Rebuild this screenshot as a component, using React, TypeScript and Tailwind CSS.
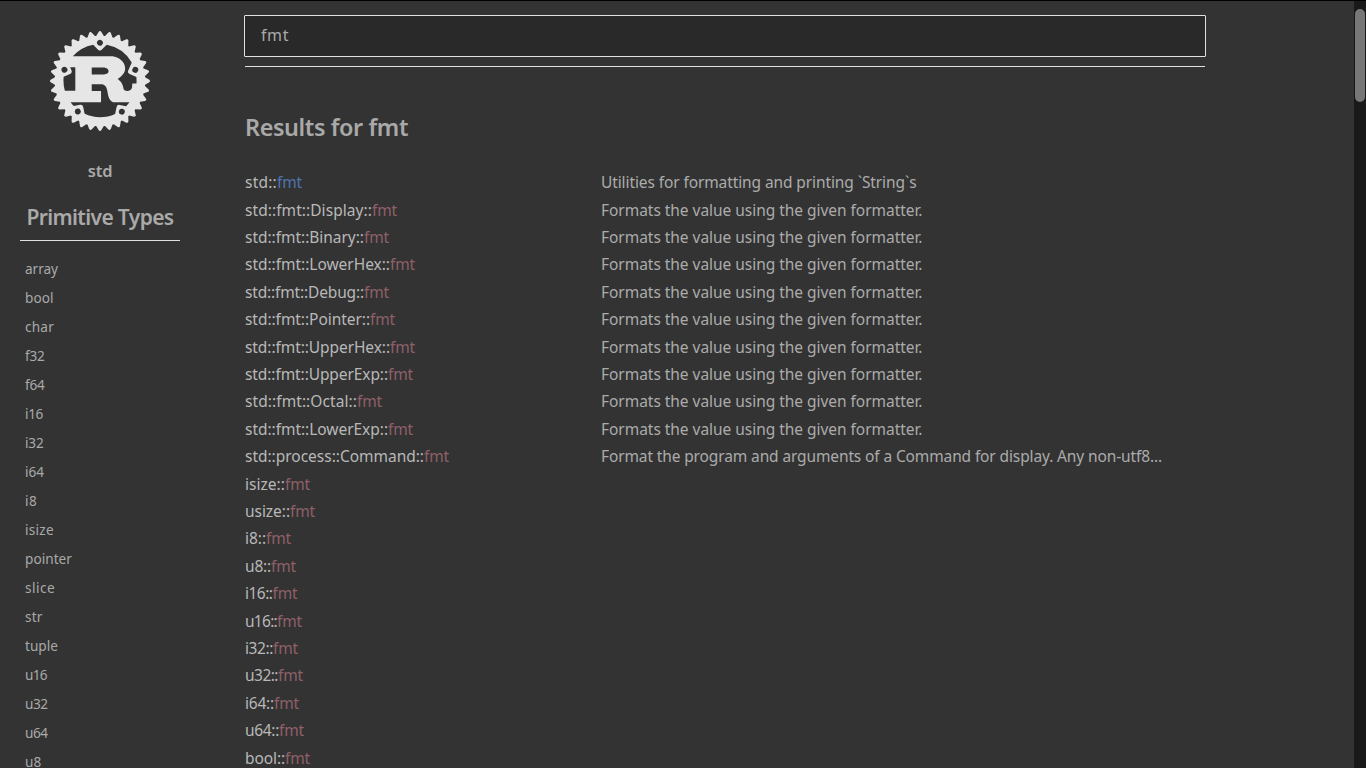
import { useLayoutEffect, useRef, useState } from "react";
import { SiRust } from "react-icons/si";

/** Text tracked so that its advance equals the given width in pixels. */
function Fit({ text, width, className = "" }: { text: string; width: number; className?: string }) {
  const ref = useRef<HTMLSpanElement>(null);
  const [spacing, setSpacing] = useState(0);
  useLayoutEffect(() => {
    const el = ref.current;
    if (!el) return;
    el.style.letterSpacing = "0px";
    const natural = el.getBoundingClientRect().width;
    const next = (width - natural) / text.length;
    el.style.letterSpacing = `${next}px`;
    setSpacing(next);
  }, [text, width]);
  return (
    <span ref={ref} className={`inline-block whitespace-pre ${className}`} style={{ letterSpacing: `${spacing}px` }}>
      {text}
    </span>
  );
}

const primitives: [string, number][] = [
  ["array", 33], ["bool", 28.5], ["char", 29], ["f32", 19.5], ["f64", 19.5], ["i16", 18], ["i32", 18.5],
  ["i64", 19], ["i8", 12.5], ["isize", 29], ["pointer", 47], ["slice", 30], ["str", 17.5], ["tuple", 33],
  ["u16", 22], ["u32", 22.5], ["u64", 22.5], ["u8", 16.5],
];

const given = "Formats the value using the given formatter.";

const results: { path: string; width: number; desc?: string; descWidth?: number; module?: boolean }[] = [
  { path: "std::", width: 32, desc: "Utilities for formatting and printing `String`s", descWidth: 315.5, module: true },
  { path: "std::fmt::Display::", width: 127, desc: given },
  { path: "std::fmt::Binary::", width: 119, desc: given },
  { path: "std::fmt::LowerHex::", width: 145, desc: given },
  { path: "std::fmt::Debug::", width: 119, desc: given },
  { path: "std::fmt::Pointer::", width: 125, desc: given },
  { path: "std::fmt::UpperHex::", width: 145, desc: given },
  { path: "std::fmt::UpperExp::", width: 143, desc: given },
  { path: "std::fmt::Octal::", width: 112, desc: given },
  { path: "std::fmt::LowerExp::", width: 143, desc: given },
  {
    path: "std::process::Command::",
    width: 179,
    desc: "Format the program and arguments of a Command for display. Any non-utf8...",
    descWidth: 561,
  },
  { path: "isize::", width: 40 },
  { path: "usize::", width: 45 },
  { path: "i8::", width: 21 },
  { path: "u8::", width: 26 },
  { path: "i16::", width: 27.5 },
  { path: "u16::", width: 32 },
  { path: "i32::", width: 28 },
  { path: "u32::", width: 33 },
  { path: "i64::", width: 29 },
  { path: "u64::", width: 34 },
  { path: "bool::", width: 40 },
];

function Sidebar() {
  return (
    <nav className="flex h-full w-[200px] shrink-0 flex-col overflow-hidden px-5 pt-[30px]">
      <SiRust className="size-[100px] shrink-0 self-center text-[#e6e6e6]" />
      <div className="mt-7 flex h-6 shrink-0 items-center justify-center text-[16.5px] font-semibold">
        <Fit text="std" width={24.5} />
      </div>
      <div className="mt-4 flex h-[42px] shrink-0 justify-center border-b border-[#e0e0e0] text-[21px] leading-[37px] font-semibold">
        <Fit text="Primitive Types" width={147} />
      </div>
      <div className="mt-[14px] flex flex-col pl-[5px] text-[13.6px]">
        {primitives.map(([name, width]) => (
          <a key={name} className="flex h-[29px] shrink-0 items-center">
            <Fit text={name} width={width} />
          </a>
        ))}
      </div>
    </nav>
  );
}

function Results() {
  return (
    <main className="flex w-[960px] shrink-0 flex-col pt-[14px] text-[15.5px]">
      <div className="-mx-px flex h-[42px] w-[962px] shrink-0 items-center rounded-[1px] border border-[#e0e0e0] bg-[#292929] px-4 pb-0.5">
        <Fit text="fmt" width={28} className="text-[16px]" />
      </div>
      <div className="mt-[9px] h-px shrink-0 bg-[#e0e0e0]" />
      <h1 className="mt-[43px] flex h-9 shrink-0 items-center text-[23.4px] font-semibold">
        <Fit text="Results for fmt" width={163} />
      </h1>
      <div className="mt-[23.06px] flex flex-col">
        {results.map((r) => (
          <div key={r.path} className="flex h-[27.41px] shrink-0 items-center">
            <div className="flex w-[356px] shrink-0 text-[#b8b8b8]">
              <Fit text={r.path} width={r.width} />
              <Fit text="fmt" width={25} className={r.module ? "text-[#4d76ae]" : "text-[#8f6069]"} />
            </div>
            {r.desc && <Fit text={r.desc} width={r.descWidth ?? 321.5} className="text-[#ababab]" />}
          </div>
        ))}
      </div>
    </main>
  );
}

export default function App() {
  return (
    <div className="flex h-screen w-screen overflow-hidden border-t border-black bg-[#333333] font-['Noto_Sans','Open_Sans',sans-serif] text-[#a9a9a9]">
      <Sidebar />
      <div className="flex min-w-0 flex-1 overflow-hidden pl-[45px]">
        <Results />
      </div>
      <div className="flex w-3 shrink-0 justify-center bg-[#191919] pt-2">
        <div className="h-[93px] w-[10px] rounded-full bg-[#777777]" />
      </div>
    </div>
  );
}
